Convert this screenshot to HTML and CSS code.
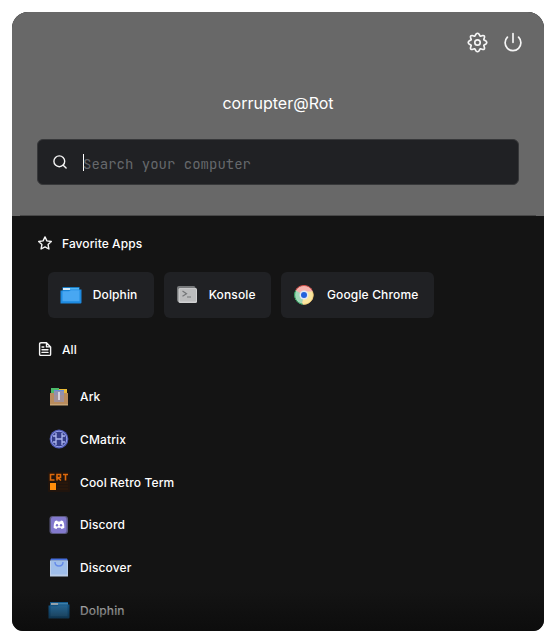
FILE: index.html
```html
<!DOCTYPE html>
<html lang="en">
<head>
<meta charset="utf-8">
<title>Application Launcher</title>
<link rel="stylesheet" href="styles.css">
</head>
<body>
<main class="launcher">
  <header class="header">
    <div class="actions">
      <svg class="gear" viewBox="-10.5 -10.5 21 21"><path d="M-2.5-6.6L-1.4-8.5Q0-10 1.4-8.5L2.5-6.6 3.04-6.29 5.3-7Q7.2-7.2 7-5.3L6.29-3.04 6.6-2.5 8.5-1.4Q10 0 8.5 1.4L6.6 2.5 6.29 3.04 7 5.3Q7.2 7.2 5.3 7L3.04 6.29 2.5 6.6 1.4 8.5Q0 10-1.4 8.5L-2.5 6.6-3.04 6.29-5.3 7Q-7.2 7.2-7 5.3L-6.29 3.04-6.6 2.5-8.5 1.4Q-10 0-8.5-1.4L-6.6-2.5-6.29-3.04-7-5.3Q-7.2-7.2-5.3-7L-3.04-6.29Z"/><circle r="2.7"/></svg>
      <svg class="power" viewBox="0 0 20 20"><path d="M10 1.500v8.800M4.400 5.200a7.900 7.900 0 1 0 11.200 0"/></svg>
    </div>
    <h1 class="user">corrupter@Rot</h1>
    <div class="search">
      <svg class="lens" viewBox="0 0 14 14"><circle cx="6.300" cy="6.300" r="5.400"/><path d="M10.200 10.200l2.900 2.900"/></svg>
      <span class="caret"></span><span class="placeholder">Search your computer</span>
    </div>
    <div class="divider"></div>
  </header>
  <section class="content">
    <h2 class="heading"><svg viewBox="0 0 14 14"><path d="M7 .9l1.900 4 4.400.6-3.200 3.100.8 4.400L7 10.900 3.100 13l.8-4.400L.7 5.500l4.400-.6z"/></svg><span>Favorite Apps</span></h2>
    <div class="favorites">
      <div class="favorite dolphin"><svg viewBox="0 0 22 22"><path d="M2.500 3h17v6h-17z" fill="#167bc4"/><path d="M3 4h7v2H3z" fill="#d8ecf9"/><path d="M10 4h9v3h-9z" fill="#54b5f3"/><path d="M.5 6.500H9l1.500-1h11v13q0 1-1 1H.5z" fill="#1d8ae0"/><path d="M2.500 7.200H9l2-1h8.500v11h-17z" fill="#48a7f2"/></svg><span>Dolphin</span></div>
      <div class="favorite konsole"><svg viewBox="0 0 22 22"><rect x="1" y="2" width="18.500" height="16" rx="2" fill="#77797b"/><rect x="2.500" y="4" width="18.500" height="15" rx="1.500" fill="#d0d1d2"/><rect x="3.500" y="4.500" width="16.500" height="13" rx="1" fill="#bbbcbd"/><path d="M6.500 7l4 2.700-4 2.500M11 13h4" fill="none" stroke="#747678" stroke-width="1.200"/></svg><span>Konsole</span></div>
      <div class="favorite chrome"><svg viewBox="0 0 22 22"><circle cx="11" cy="11" r="9.500" fill="#f5b3ae"/><path d="M11 11L2.500 6.500A9.500 9.500 0 0 0 9 20.300z" fill="#a2d8b9"/><path d="M11 11L9 20.300A9.500 9.500 0 0 0 19.600 7.500H11z" fill="#fbe6a0"/><path d="M2.700 6.400A9.400 9.400 0 0 1 19.200 6.400" fill="none" stroke="#d55049"/><path d="M2.700 6.600A9.400 9.400 0 0 0 10 20.300" fill="none" stroke="#279b57"/><path d="M11 20.300A9.300 9.300 0 0 0 19.600 7.500" fill="none" stroke="#dfbc50" stroke-width=".6"/><circle cx="11" cy="11" r="4.500" fill="#e1e6f4"/><circle cx="11" cy="11" r="3" fill="#2461dc"/></svg><span>Google Chrome</span></div>
    </div>
    <h2 class="heading all"><svg viewBox="0 0 14 14"><path d="M3 .8h5.500L12.600 4.900v7.300q0 1.200-1.200 1.200H3q-1.400 0-1.400-1.200V2Q1.600.8 3 .8M8.500.8v4.100h4.100M4 5h1.800M4 7.700h6M4 10.400h6"/></svg><span>All</span></h2>
    <ul class="apps">
      <li><svg viewBox="0 0 22 22"><path d="M3 2h8v7H3z" fill="#4dbb6c"/><path d="M11 3h8v6h-8z" fill="#e9bb37"/><path d="M6 4h10v7H6z" fill="#668bd8"/><path d="M2 7h4v2h10V7h4v12H2z" fill="#b98c5d"/><path d="M6 5h10v11H6z" fill="#9b91a8" opacity=".8"/><path d="M10 6h2v8h-2z" fill="#d6d1dc"/><path d="M2 18h18v1.500H2z" fill="#c8a577"/></svg><span>Ark</span></li>
      <li><svg viewBox="0 0 22 22"><circle cx="11" cy="11" r="9.400" fill="#515cb8"/><circle cx="11" cy="11" r="7.800" fill="#343d88" stroke="#949fea"/><path d="M8 5v12M14 5v12M8 11h6M5 8h3M14 8h3M5 14h3M14 14h3" fill="none" stroke="#aab4ed" stroke-width="1.300"/></svg><span>CMatrix</span></li>
      <li><svg viewBox="0 0 22 22"><rect y="1" width="22" height="20" rx="1" fill="#20140d"/><path d="M6.500 3.500H2.500v5.500h4M9 9.500V3.500h3.500V6.500H9.500l3.500 3M15 3.500h5M17.500 3.500v6" fill="none" stroke="#dd690b" stroke-width="1.600"/><path d="M2 12h6v7H2z" fill="#ff8d0b"/><path d="M9 12h11M9 15h11M9 18h11" stroke="#321b0b"/></svg><span>Cool Retro Term</span></li>
      <li><svg viewBox="0 0 22 22"><rect x="1.500" y="2" width="18.500" height="18" rx="3" fill="#5b5980"/><rect x="3" y="3" width="15.500" height="16" rx="2" fill="#8279cd"/><path d="M7 7l2-.6.8 1h2.400l.8-1L15 7q1.700 3.200 1.400 6.700-1.200 1-2.900 1.300l-.8-1.200H9.300L8.500 15q-1.700-.3-2.900-1.300Q5.300 10.200 7 7z" fill="#fff"/><circle cx="9" cy="11.200" r="1.200" fill="#7a70cc"/><circle cx="13" cy="11.200" r="1.200" fill="#7a70cc"/></svg><span>Discord</span></li>
      <li><svg viewBox="0 0 22 22"><path d="M3 1.500h16l1 2H2z" fill="#466fe0"/><path d="M2 3.500h18v16H2z" fill="#bacde8"/><path d="M3 3.500h16v14H3z" fill="#9fbeea"/><path d="M7 5q0 4 4 4t4-4" fill="none" stroke="#658bea" stroke-width="1.400"/></svg><span>Discover</span></li>
      <li><svg viewBox="0 0 22 22"><path d="M2 3h18v6H2z" fill="#167bc4"/><path d="M3 4h7v2H3z" fill="#d8ecf9"/><path d="M10 4h10v3H10z" fill="#54b5f3"/><path d="M.5 6.500H9l1.500-1h11v13q0 1-1 1H.5z" fill="#167bc4"/><path d="M2.500 7.200H9l2-1h8.500v11h-17z" fill="#3296dc"/></svg><span>Dolphin</span></li>
    </ul>
  </section>
</main>
</body>
</html>
```
FILE: styles.css
```css
* { box-sizing: border-box; }
body {
  margin: 0;
  padding: 12px;
  background: #fff;
  color: #fff;
  font-family: Inter, sans-serif;
}
svg { display: block; flex: none; }
h1, h2, ul { margin: 0; padding: 0; font-weight: 400; }
.launcher {
  position: relative;
  height: 619px;
  overflow: hidden;
  border-radius: 16px 16px 11px 11px;
  background: #141414;
}
.header {
  height: 204px;
  padding: 19px 25px 0;
  background: #686868;
}
.actions {
  height: 22px;
  display: flex;
  align-items: center;
  justify-content: flex-end;
  gap: 15px;
  padding-right: 20.7px;
  margin-right: -25px;
}
.actions svg, .lens, .heading svg {
  fill: none;
  stroke: #f5f5f5;
  stroke-linecap: round;
  stroke-linejoin: round;
}
.gear { width: 21px; height: 21px; stroke-width: 1.7; }
.power { width: 20px; height: 20px; stroke-width: 1.7; }
.user {
  margin-top: 38px;
  font-size: 16px;
  line-height: 24px;
  text-align: center;
}
.search {
  height: 46px;
  margin-top: 24px;
  padding-left: 15.3px;
  display: flex;
  align-items: center;
  border: 1px solid #37383a;
  border-radius: 6px;
  background: #202124;
}
.lens { width: 14px; height: 14px; stroke-width: 1.4; }
.caret { width: 1px; height: 17px; margin: 0 -1px 0 15.7px; background: #fff; }
.placeholder {
  padding-top: 3px;
  color: #66696c;
  font: 14px/20px "JetBrains Mono", "DejaVu Sans Mono", monospace;
}
.divider { height: 1px; margin: 30px -17px 0; background: #484848; }
.content {
  padding: 17px 26px 0;
  font-size: 12px;
  font-weight: 500;
  letter-spacing: .14px;
}
.heading {
  display: flex;
  align-items: center;
  gap: 10px;
  height: 20px;
  font-size: 12px;
  font-weight: 500;
  letter-spacing: .08px;
}
.heading svg { width: 14px; height: 14px; stroke-width: 1.4; }
.favorites { display: flex; gap: 10px; margin: 18.5px 0 0 9.7px; }
.favorite {
  height: 46px;
  padding-left: 12px;
  display: flex;
  align-items: center;
  gap: 11px;
  border-radius: 6px;
  background: #202124;
}
.favorite svg { width: 22px; height: 22px; }
.dolphin { width: 106px; }
.konsole { width: 107.3px; }
.chrome { width: 152.7px; gap: 12px; }
.all { margin-top: 21.5px; }
.content .apps {
  list-style: none;
  margin: 16.3px 0 0 10px;
  font-weight: 500;
  letter-spacing: .12px;
}
.apps li { display: flex; align-items: center; gap: 10px; height: 42.75px; }
.apps svg { width: 22px; height: 22px; }
.launcher::after {
  content: "";
  position: absolute;
  inset: auto 0 0;
  height: 43px;
  background: linear-gradient(rgba(12, 12, 12, 0), rgba(12, 12, 12, .9));
}
```
